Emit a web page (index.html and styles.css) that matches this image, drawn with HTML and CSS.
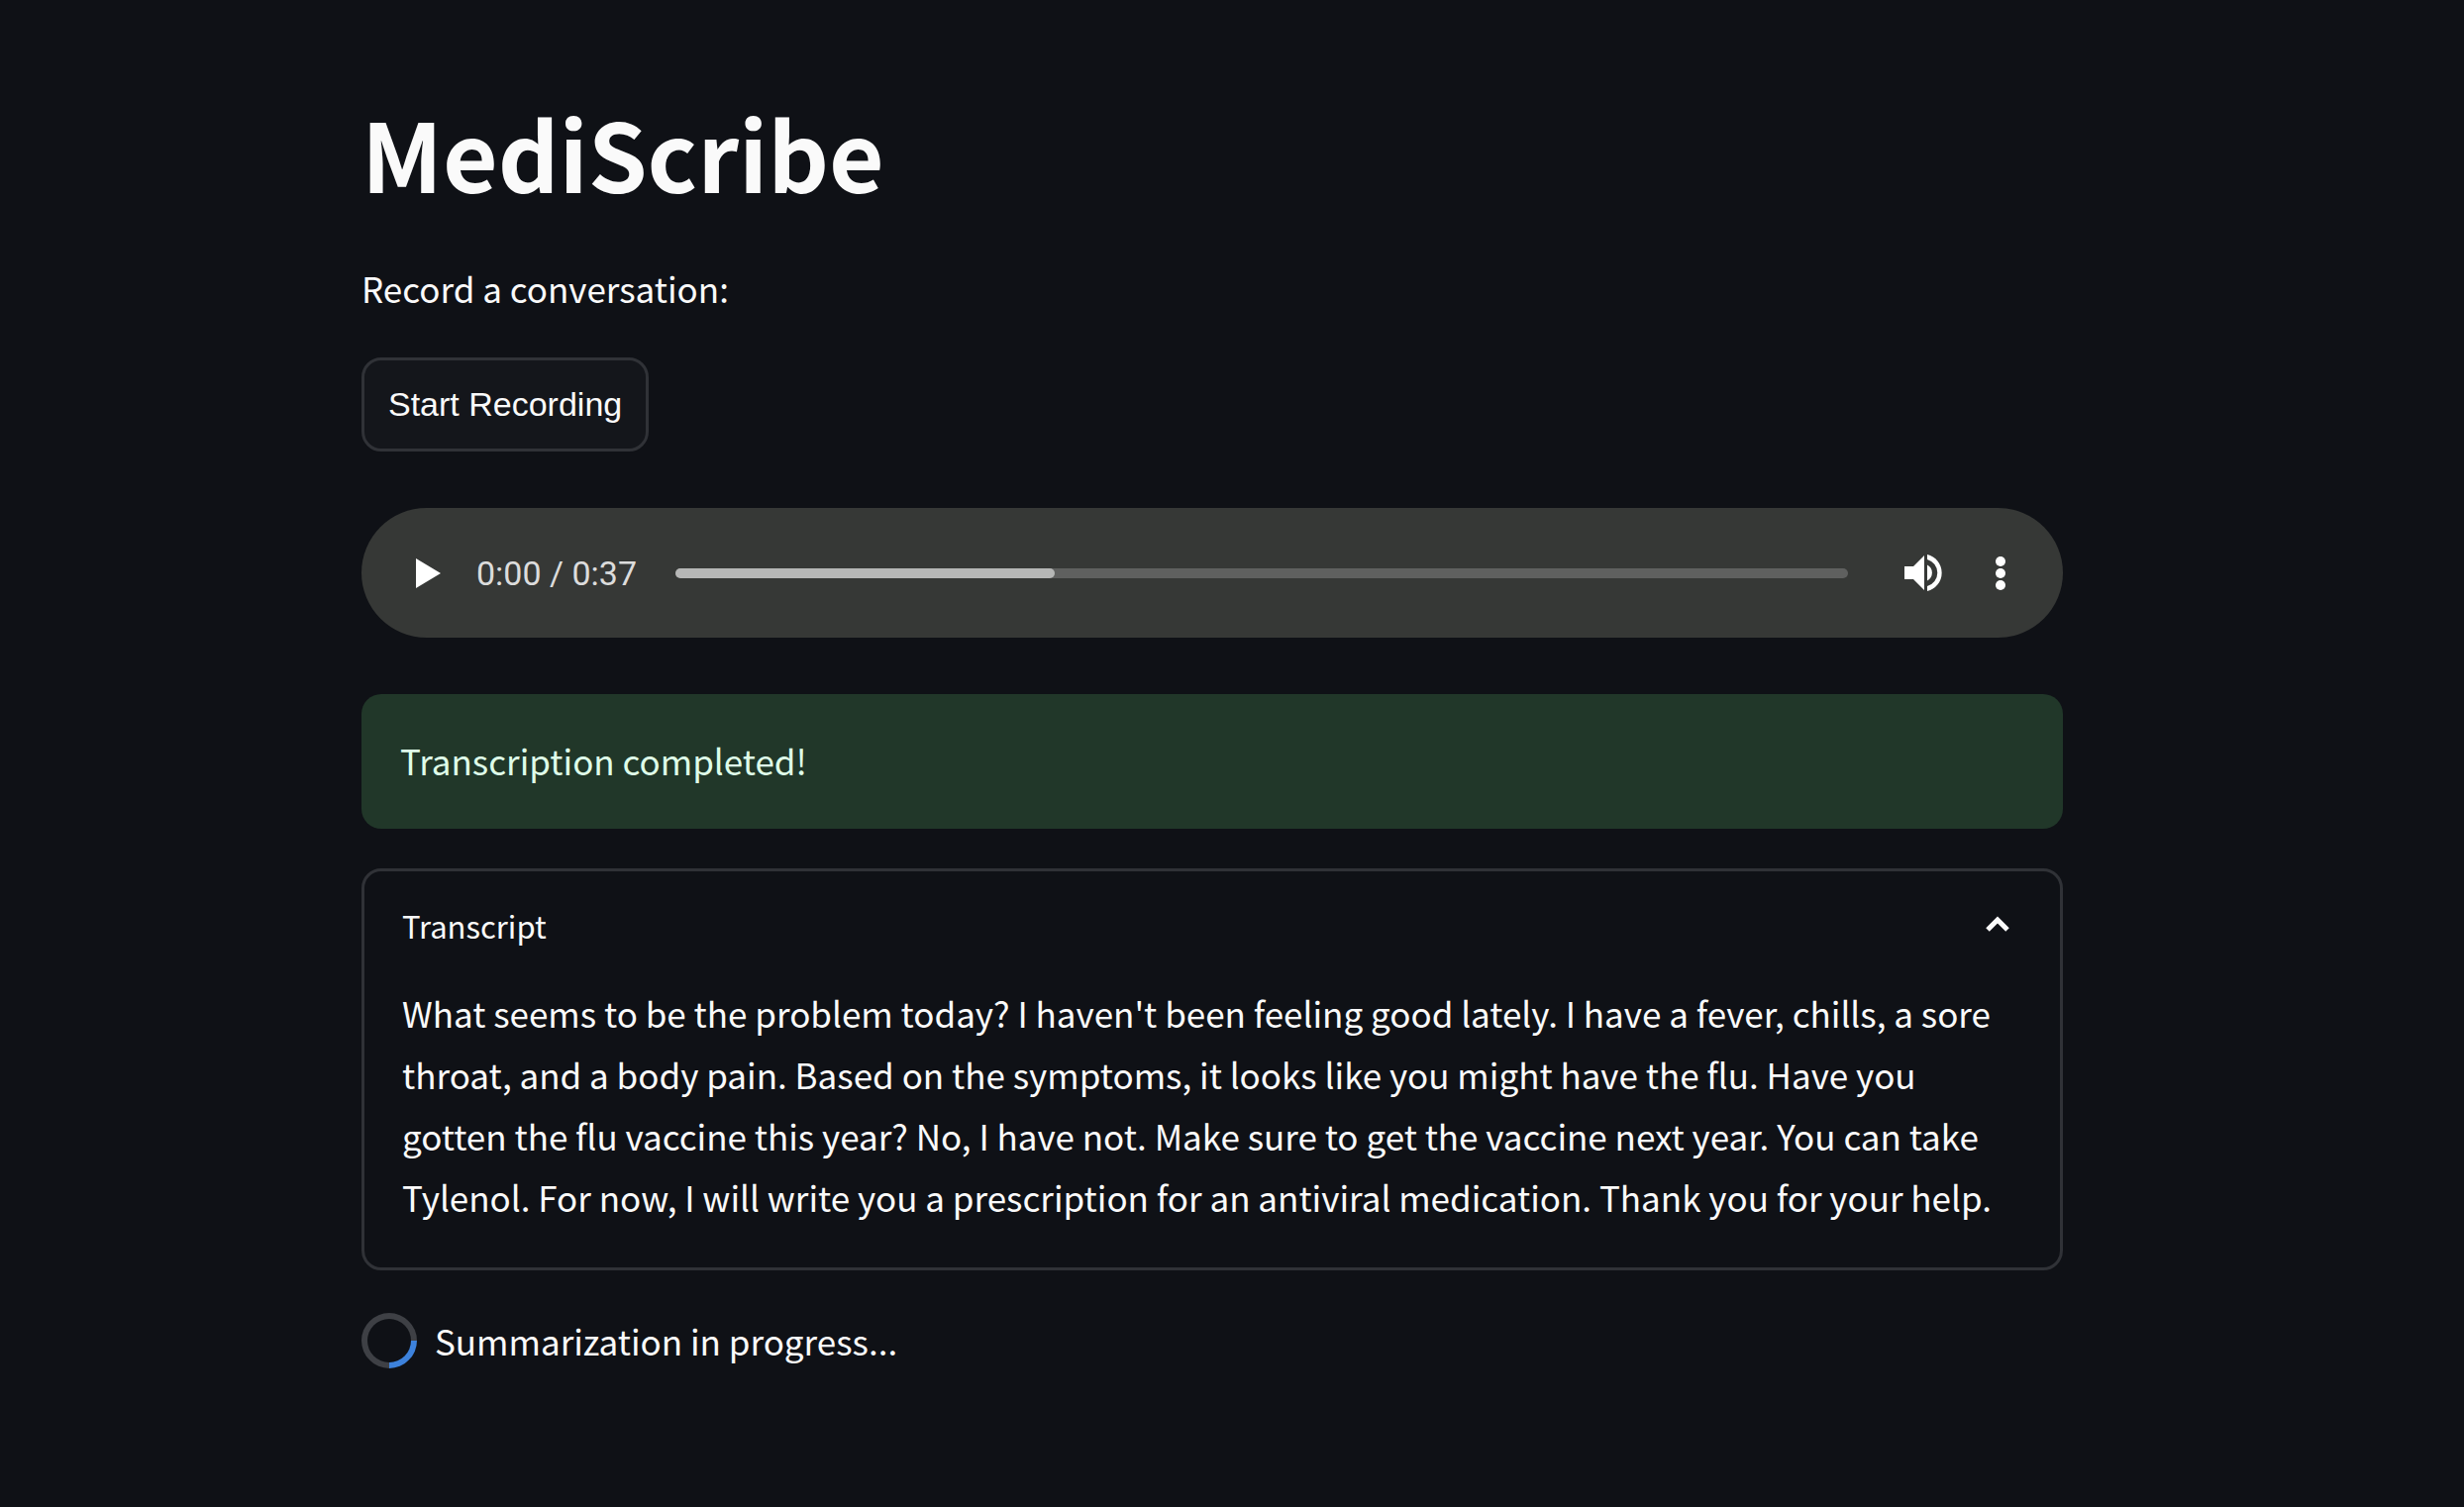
FILE: index.html
```html
<!DOCTYPE html>
<html lang="en">
<head>
<meta charset="utf-8">
<title>MediScribe</title>
<link rel="stylesheet" href="styles.css">
</head>
<body>
<main class="app">
  <h1 class="title">MediScribe</h1>
  <p class="prompt">Record a conversation:</p>
  <button class="record" type="button">Start Recording</button>

  <section class="player" aria-label="Audio player">
    <button class="icon-button" type="button" aria-label="Play">
      <svg width="25" height="32" viewBox="0 0 25 32"><path d="M0 1 25 16 0 31z"/></svg>
    </button>
    <span class="time">0:00 / 0:37</span>
    <input class="seek" type="range" min="0" max="1184" value="376" aria-label="Position">
    <button class="icon-button volume" type="button" aria-label="Mute">
      <svg width="38" height="37" viewBox="0 0 38 37"><path d="M0 12h9L20 1v35L9 25H0z"/><path d="M23 10.500a9 9 0 0 1 0 16z"/><path d="M23 0a19 19 0 0 1 0 37v-5a14 14 0 0 0 0-27z"/></svg>
    </button>
    <button class="icon-button" type="button" aria-label="More options">
      <svg width="10" height="34" viewBox="0 0 10 34"><circle cx="5" cy="5" r="5"/><circle cx="5" cy="17" r="5"/><circle cx="5" cy="29" r="5"/></svg>
    </button>
  </section>

  <div class="alert" role="status">Transcription completed!</div>

  <details class="expander" open>
    <summary class="expander-head">
      <span>Transcript</span>
      <svg class="chevron" width="26" height="22" viewBox="0 0 26 22"><path d="M3 15 13 5 23 15"/></svg>
    </summary>
    <p class="expander-text">What seems to be the problem today? I haven't been feeling good lately. I have a fever, chills, a sore throat, and a body pain. Based on the symptoms, it looks like you might have the flu. Have you gotten the flu vaccine this year? No, I have not. Make sure to get the vaccine next year. You can take Tylenol. For now, I will write you a prescription for an antiviral medication. Thank you for your help.</p>
  </details>

  <div class="progress" role="status">
    <span class="spinner"></span>
    <span>Summarization in progress...</span>
  </div>
</main>
</body>
</html>
```
FILE: styles.css
```css
* {
  box-sizing: border-box;
}

body {
  margin: 0;
  min-height: 100vh;
  background: #0f1116;
  color: #fafafa;
  font-family: "Noto Sans CJK SC", "Noto Sans", sans-serif;
  font-size: 35px;
  line-height: 62px;
}

.app {
  display: flex;
  flex-direction: column;
  align-items: flex-start;
  width: 70%;
  max-width: 1718px;
  margin-left: 365px;
  padding: 96px 0;
}

.title {
  margin: 0;
  font-size: 96px;
  font-weight: 700;
  line-height: 116px;
}

.prompt {
  margin: 48px 0 39px;
}

.record {
  height: 95px;
  padding: 0 24px;
  border: 3px solid #303237;
  border-radius: 20px;
  background: #14161b;
  color: #fafafa;
  font-family: "Liberation Sans", Arial, sans-serif;
  font-size: 34px;
}

.player {
  display: flex;
  align-items: center;
  width: 100%;
  height: 131px;
  margin-top: 57px;
  padding: 0 58px 0 55px;
  border-radius: 66px;
  background: #363836;
}

.icon-button {
  display: flex;
  padding: 0;
  border: 0;
  background: none;
  fill: #fff;
}

.time {
  margin: 0 39px 0 36px;
  color: #dcdcdc;
  font-family: Roboto, sans-serif;
  font-size: 34px;
}

.seek {
  flex: 1;
  height: 10px;
  margin: 0;
  border-radius: 5px;
  appearance: none;
  background: #5f605f;
  overflow: hidden;
}

.seek::-webkit-slider-thumb {
  appearance: none;
  width: 10px;
  height: 10px;
  border-radius: 5px;
  background: #b6b7b6;
  box-shadow: -1000px 0 0 995px #b6b7b6;
}

.volume {
  margin: 0 54px 0 57px;
}

.alert {
  width: 100%;
  margin-top: 57px;
  padding: 36px 39px 38px;
  border-radius: 20px;
  background: #213729;
  color: #dffde9;
}

.expander {
  width: 100%;
  margin-top: 40px;
  padding: 24px 38px 40px;
  border: 3px solid #303237;
  border-radius: 20px;
}

.expander-head {
  display: flex;
  align-items: center;
  justify-content: space-between;
  padding-right: 12px;
  font-size: 31px;
  list-style: none;
}

.chevron {
  fill: none;
  stroke: #fafafa;
  stroke-width: 5;
}

.expander-text {
  margin: 26px 0 0;
}

.progress {
  display: flex;
  align-items: center;
  gap: 18px;
  margin-top: 40px;
}

.spinner {
  width: 56px;
  height: 56px;
  border: 6px solid #3e4045;
  border-right-color: #3d82dc;
  border-radius: 50%;
  transform: rotate(45deg);
}
```
